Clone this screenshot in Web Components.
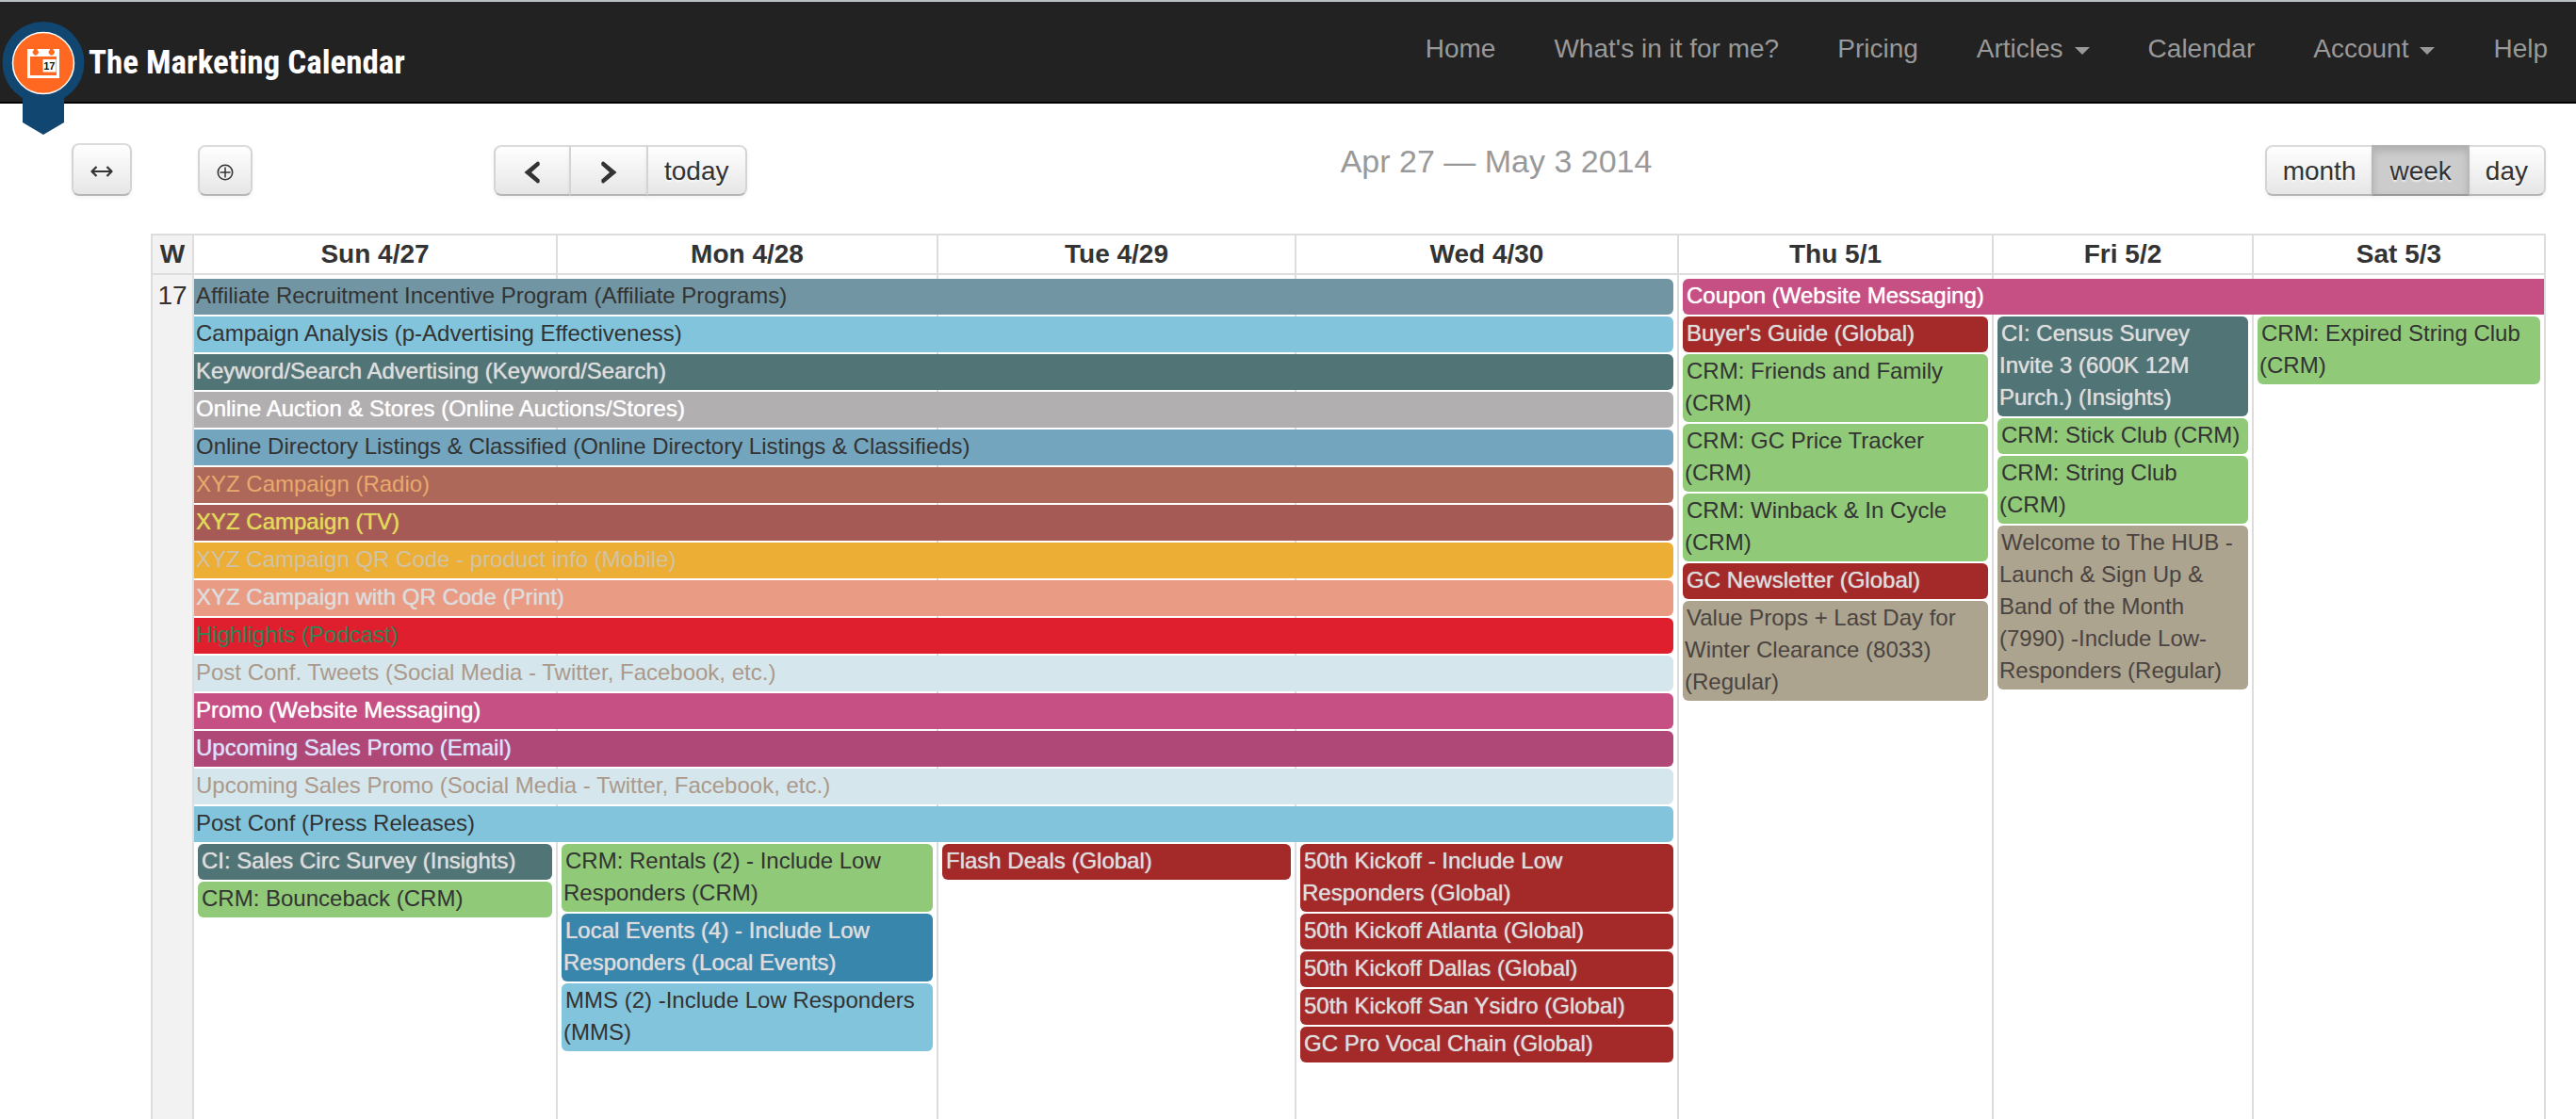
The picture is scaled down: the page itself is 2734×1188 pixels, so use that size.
<!DOCTYPE html>
<html lang="en">
<head>
<meta charset="utf-8">
<title>The Marketing Calendar</title>
<style>
  html { --line: #ddd; --ink: #333; }
  body {
    margin: 0; min-height: 100vh; display: flex; flex-direction: column;
    background: #fff; color: #333;
    font: 28px/40px "Liberation Sans", Arial, Helvetica, sans-serif;
  }
  week-calendar { flex: 1; }
</style>
</head>
<body>

<site-header>
  <nav-link>Home</nav-link>
  <nav-link>What's in it for me?</nav-link>
  <nav-link>Pricing</nav-link>
  <nav-link menu>Articles</nav-link>
  <nav-link>Calendar</nav-link>
  <nav-link menu>Account</nav-link>
  <nav-link>Help</nav-link>
</site-header>

<calendar-toolbar>
  <tool-button slot="tools" icon="wide" label="Toggle width"></tool-button>
  <tool-button slot="tools" icon="plus" label="Add event"></tool-button>
  <button-group slot="left">
    <tool-button icon="prev" label="Previous week"></tool-button>
    <tool-button icon="next" label="Next week"></tool-button>
    <tool-button>today</tool-button>
  </button-group>
  <span slot="title">Apr 27 — May 3 2014</span>
  <button-group slot="right">
    <tool-button>month</tool-button>
    <tool-button active>week</tool-button>
    <tool-button>day</tool-button>
  </button-group>
</calendar-toolbar>

<week-calendar week="17" days="Sun 4/27,Mon 4/28,Tue 4/29,Wed 4/30,Thu 5/1,Fri 5/2,Sat 5/3">
  <cal-event span="1-4" row="1" kind="affiliate">Affiliate Recruitment Incentive Program (Affiliate Programs)</cal-event>
  <cal-event span="1-4" row="2" kind="sky">Campaign Analysis (p-Advertising Effectiveness)</cal-event>
  <cal-event span="1-4" row="3" kind="teal">Keyword/Search Advertising (Keyword/Search)</cal-event>
  <cal-event span="1-4" row="4" kind="auction">Online Auction &amp; Stores (Online Auctions/Stores)</cal-event>
  <cal-event span="1-4" row="5" kind="directory">Online Directory Listings &amp; Classified (Online Directory Listings &amp; Classifieds)</cal-event>
  <cal-event span="1-4" row="6" kind="radio">XYZ Campaign (Radio)</cal-event>
  <cal-event span="1-4" row="7" kind="tv">XYZ Campaign (TV)</cal-event>
  <cal-event span="1-4" row="8" kind="mobile">XYZ Campaign QR Code - product info (Mobile)</cal-event>
  <cal-event span="1-4" row="9" kind="print">XYZ Campaign with QR Code (Print)</cal-event>
  <cal-event span="1-4" row="10" kind="podcast">Highlights (Podcast)</cal-event>
  <cal-event span="1-4" row="11" kind="social">Post Conf. Tweets (Social Media - Twitter, Facebook, etc.)</cal-event>
  <cal-event span="1-4" row="12" kind="website">Promo (Website Messaging)</cal-event>
  <cal-event span="1-4" row="13" kind="email">Upcoming Sales Promo (Email)</cal-event>
  <cal-event span="1-4" row="14" kind="social">Upcoming Sales Promo (Social Media - Twitter, Facebook, etc.)</cal-event>
  <cal-event span="1-4" row="15" kind="sky">Post Conf (Press Releases)</cal-event>
  <cal-event span="5-7" row="1" kind="website">Coupon (Website Messaging)</cal-event>

  <day-stack day="1" row="16">
    <cal-event kind="teal">CI: Sales Circ Survey (Insights)</cal-event>
    <cal-event kind="crm">CRM: Bounceback (CRM)</cal-event>
  </day-stack>
  <day-stack day="2" row="16">
    <cal-event kind="crm">CRM: Rentals (2) - Include Low Responders (CRM)</cal-event>
    <cal-event kind="local">Local Events (4) - Include Low Responders (Local Events)</cal-event>
    <cal-event kind="sky">MMS (2) -Include Low Responders (MMS)</cal-event>
  </day-stack>
  <day-stack day="3" row="16">
    <cal-event kind="global">Flash Deals (Global)</cal-event>
  </day-stack>
  <day-stack day="4" row="16">
    <cal-event kind="global">50th Kickoff - Include Low Responders (Global)</cal-event>
    <cal-event kind="global">50th Kickoff Atlanta (Global)</cal-event>
    <cal-event kind="global">50th Kickoff Dallas (Global)</cal-event>
    <cal-event kind="global">50th Kickoff San Ysidro (Global)</cal-event>
    <cal-event kind="global">GC Pro Vocal Chain (Global)</cal-event>
  </day-stack>
  <day-stack day="5" row="2">
    <cal-event kind="global">Buyer's Guide (Global)</cal-event>
    <cal-event kind="crm">CRM: Friends and Family (CRM)</cal-event>
    <cal-event kind="crm">CRM: GC Price Tracker (CRM)</cal-event>
    <cal-event kind="crm">CRM: Winback &amp; In Cycle (CRM)</cal-event>
    <cal-event kind="global">GC Newsletter (Global)</cal-event>
    <cal-event kind="regular">Value Props + Last Day for Winter Clearance (8033) (Regular)</cal-event>
  </day-stack>
  <day-stack day="6" row="2">
    <cal-event kind="teal">CI: Census Survey Invite 3 (600K 12M Purch.) (Insights)</cal-event>
    <cal-event kind="crm">CRM: Stick Club (CRM)</cal-event>
    <cal-event kind="crm">CRM: String Club (CRM)</cal-event>
    <cal-event kind="regular">Welcome to The HUB - Launch &amp; Sign Up &amp; Band of the Month (7990) -Include Low-Responders (Regular)</cal-event>
  </day-stack>
  <day-stack day="7" row="2">
    <cal-event kind="crm">CRM: Expired String Club (CRM)</cal-event>
  </day-stack>
</week-calendar>

<script>
class Base extends HTMLElement {
  connectedCallback() {
    if (this.shadowRoot) return;
    this.attachShadow({ mode: "open" }).innerHTML = this.render();
  }
}

customElements.define("site-header", class extends Base {
  render() {
    return `<style>
      :host { display: block; }
      header { display: flex; justify-content: space-between; align-items: flex-start; box-sizing: border-box;
        height: 110px; background: #222; border-top: 2px solid #b9c0c2; border-bottom: 2px solid #000; }
      .brand { display: flex; align-items: flex-start; gap: 4px; color: #fff; text-decoration: none; }
      svg { display: block; flex: none; margin-bottom: -34px; position: relative; z-index: 1; }
      .name { font: bold 35px/50px "Liberation Sans Narrow", "Roboto Condensed", "Liberation Sans", sans-serif; padding-top: 40px; white-space: nowrap; }
      nav { display: flex; gap: 2px; padding-top: 30px; }
    </style>
    <header>
      <a class="brand" href="#" aria-label="The Marketing Calendar">
        <svg width="90" height="142" viewBox="0 2 90 142" aria-hidden="true">
          <path d="M24 96h44v34l-22 13-22-13z" fill="#10466f"/>
          <circle cx="46" cy="66.500" r="43.500" fill="#10466f"/>
          <circle cx="46" cy="67" r="32.500" fill="#ff6820" stroke="#fff" stroke-width="1.500"/>
          <path d="M29 52H63V83H29Z M32 60V80H60V60Z" fill="#fff" fill-rule="evenodd"/>
          <path d="M36 50.500h3.500v2.500a3 3 0 1 1-3.500 0zM53 50.500h3.500v2.500a3 3 0 1 1-3.500 0z" fill="#ff6820"/>
          <rect x="45.500" y="63" width="14" height="13.500" fill="#fff"/>
          <text x="52.300" y="74" text-anchor="middle" font-family="Liberation Sans, sans-serif" font-weight="bold" font-size="11" fill="#111">17</text>
        </svg>
        <span class="name">The Marketing Calendar</span>
      </a>
      <nav aria-label="Main"><slot></slot></nav>
    </header>`;
  }
});

customElements.define("nav-link", class extends Base {
  render() {
    const caret = this.hasAttribute("menu") ? `<i></i>` : "";
    return `<style>
      :host { display: block; }
      a { display: flex; align-items: center; gap: 12px; padding: 0 30px; color: #999; text-decoration: none; white-space: nowrap; }
      i { border: 8px solid transparent; border-top-color: #999; border-bottom: 0; margin-top: 4px; }
    </style><a href="#"><slot></slot>${caret}</a>`;
  }
});

const ICONS = {
  wide: `<svg width="24" height="14" viewBox="0 0 24 14"><path d="M1.500 7h21M6.500 2L1.500 7l5 5M17.500 2l5 5-5 5" fill="none" stroke="#333" stroke-width="2.200" stroke-linejoin="round"/></svg>`,
  plus: `<svg width="18" height="18" viewBox="0 0 18 18"><path d="M9 3.500v11M3.500 9h11" stroke="#333" stroke-width="1.500"/><circle cx="9" cy="9" r="7.700" fill="none" stroke="#333" stroke-width="1.600"/></svg>`,
  prev: `<svg width="18" height="24" viewBox="0 0 18 24"><path d="M.5 12L14 .8q2.400-.8 2.700 1.400v2L8 12l8.700 7.800v2q-.3 2.200-2.700 1.400z" fill="#333"/></svg>`,
  next: `<svg width="18" height="24" viewBox="0 0 18 24"><path d="M17.500 12L4 .8q-2.400-.8-2.700 1.400v2L10 12l-8.700 7.800v2q.3 2.200 2.700 1.400z" fill="#333"/></svg>`
};

customElements.define("tool-button", class extends Base {
  render() {
    const icon = this.getAttribute("icon");
    const label = this.getAttribute("label");
    return `<style>
      :host { display: block; }
      :host([active]) { position: relative; z-index: 1; }
      button { display: flex; align-items: center; justify-content: center; box-sizing: border-box; margin: 0;
        height: 54px; padding: 2px 17px 0; font: inherit; line-height: 40px; color: #333; text-shadow: 0 2px 2px rgba(255,255,255,.75);
        border: 2px solid; border-color: #dcdcdc #d4d4d4 #b6b6b6; border-radius: var(--radius, 8px);
        background: linear-gradient(#fff, #e6e6e6); box-shadow: 0 2px 4px rgba(0,0,0,.05); }
      :host([active]) button { background: #ccc; border-color: #b3b3b3 #b8b8b8 #999;
        box-shadow: inset 0 4px 8px rgba(0,0,0,.15), 0 2px 4px rgba(0,0,0,.05); }
      .prev { width: 82px; }
      .next { width: 84px; }
      .plus { width: 58px; }
      .wide { width: 64px; height: 56px; }
      svg { display: block; flex: none; margin-top: 2px; }
    </style><button type="button" class="${icon || ""}" ${label ? `aria-label="${label}"` : ""}>${icon ? ICONS[icon] : "<slot></slot>"}</button>`;
  }
});

customElements.define("button-group", class extends Base {
  render() {
    return `<style>
      :host { display: flex; }
      ::slotted(tool-button) { --radius: 0; margin-left: -2px; }
      ::slotted(tool-button:first-child) { --radius: 8px 0 0 8px; margin-left: 0; }
      ::slotted(tool-button:last-child) { --radius: 0 8px 8px 0; }
    </style><slot></slot>`;
  }
});

customElements.define("calendar-toolbar", class extends Base {
  render() {
    return `<style>
      :host { display: flex; align-items: flex-end; padding: 42px 32px 40px 76px; }
      .tools { display: flex; align-items: flex-end; gap: 70px; width: 448px; flex: none; }
      .bar { flex: 1; display: grid; grid-template-columns: 18fr auto 19fr; align-items: end; }
      .right { justify-self: end; }
      h1 { margin: 0 0 20px; font-size: 34px; line-height: 34px; font-weight: normal; color: #999; white-space: nowrap; }
    </style>
    <div class="tools"><slot name="tools"></slot></div>
    <div class="bar">
      <div><slot name="left"></slot></div>
      <h1><slot name="title"></slot></h1>
      <div class="right"><slot name="right"></slot></div>
    </div>`;
  }
});

customElements.define("week-calendar", class extends Base {
  render() {
    const days = this.getAttribute("days").split(",");
    return `<style>
      :host { display: flex; flex-direction: column; margin: 0 32px 0 160px;
        --cols: 44fr 386fr 404fr 380fr 406fr 334fr 276fr 312fr; }
      .head, .body { display: grid; grid-template-columns: var(--cols); }
      .head { border: solid var(--line); border-width: 2px 0; font-weight: bold; text-align: center; }
      .body { flex: 1; row-gap: 2px; grid-template-rows: 2px repeat(16, auto) 1fr; }
      .cell { border-left: 2px solid var(--line); min-width: 0; }
      .cell.last { border-right: 2px solid var(--line); }
      .body .cell { grid-row: 1 / -1; }
      .week { background: #f2f2f2; text-align: center; }
      .body .week { padding-top: 2px; }
    </style>
    <div class="head" role="row">
      <div class="cell week" role="columnheader">W</div>
      ${days.map((d, i) => `<div class="cell${i === 6 ? " last" : ""}" role="columnheader">${d}</div>`).join("")}
    </div>
    <div class="body">
      <div class="cell week" style="grid-column:1">${this.getAttribute("week")}</div>
      ${days.map((d, i) => `<div class="cell${i === 6 ? " last" : ""}" style="grid-column:${i + 2}"></div>`).join("")}
      <slot></slot>
    </div>`;
  }
});

customElements.define("day-stack", class extends Base {
  render() {
    const day = +this.getAttribute("day"), row = +this.getAttribute("row") + 1;
    return `<style>
      :host { display: flex; flex-direction: column; gap: 2px; min-width: 0; align-self: start;
        grid-column: ${day + 1}; grid-row: ${row} / -1; margin: 0 ${day === 7 ? 6 : 4}px 0 6px; }
    </style><slot></slot>`;
  }
});

const KINDS = {
  affiliate: ["#7195a3", "#333"], sky: ["#81c4db", "#333"], teal: ["#517576", "#ddd"],
  auction: ["#b1afb0", "#fff"], directory: ["#74a5be", "#333"], radio: ["#ad685a", "#e9a96b"],
  tv: ["#a65a55", "#e2da5a"], mobile: ["#ecae35", "#d0c3a6"], print: ["#e99b83", "#ddd"],
  podcast: ["#df1f2e", "#2e8557"], social: ["#d5e7ec", "#ac998b"], website: ["#c65084", "#fff"],
  email: ["#af4777", "#dbe2fa"], crm: ["#90c978", "#333"], local: ["#3986ad", "#ddd"],
  global: ["#a42a2a", "#ddd"], regular: ["#aca48f", "#4a4340"]
};
const LIGHT = ["#ddd", "#fff", "#dbe2fa", "#e2da5a"];

customElements.define("cal-event", class extends Base {
  render() {
    const [bg, fg] = KINDS[this.getAttribute("kind")];
    const span = this.getAttribute("span");
    let place = "padding-left: 2px; padding-right: 4px; border-radius: 6px;";
    if (span) {
      const [from, to] = span.split("-").map(Number);
      const row = +this.getAttribute("row") + 1;
      const openStart = from === 1, openEnd = to === 7;
      place = `grid-column: ${from + 1} / ${to + 2}; grid-row: ${row};
        margin: 0 ${openEnd ? 2 : 4}px 0 ${openStart ? 2 : 6}px; padding-left: ${openStart ? 0 : 2}px;
        border-radius: ${openStart ? "0" : "6px"} ${openEnd ? "0 0" : "6px 6px"} ${openStart ? "0" : "6px"};`;
    }
    return `<style>
      :host { display: block; min-width: 0; ${place} padding-top: 1px; padding-bottom: 3px;
        background: ${bg}; font-size: 24px; line-height: 34px; }
      a { color: ${fg}; text-decoration: none; padding-left: 2px; ${LIGHT.includes(fg) ? "text-shadow: 0 0 1px currentColor;" : ""} }
    </style><a href="#"><slot></slot></a>`;
  }
});
</script>
</body>
</html>
